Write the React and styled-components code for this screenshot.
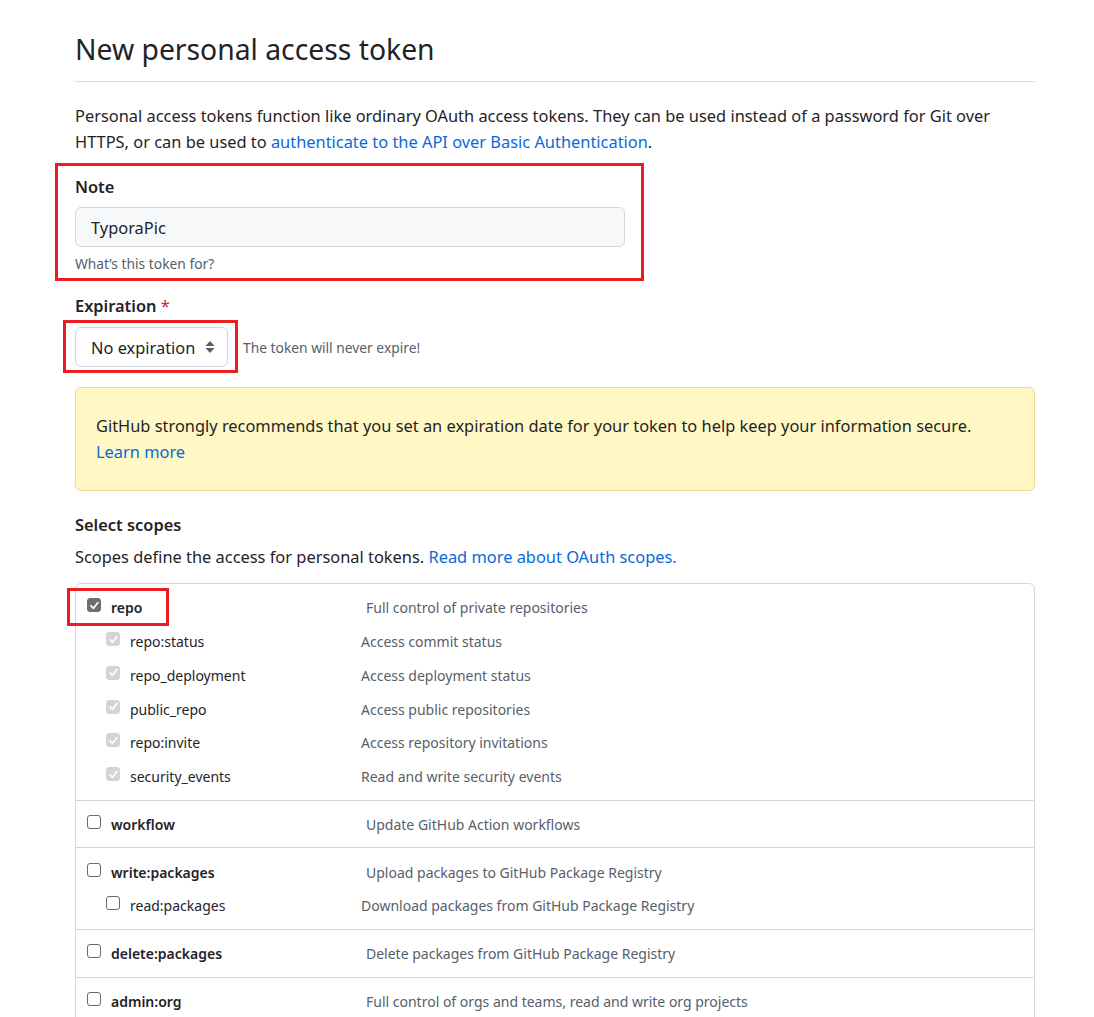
import React from 'react'
import styled, { createGlobalStyle } from 'styled-components'

const GlobalStyle = createGlobalStyle`
  body {
    margin: 0;
    background: #ffffff;
    font-family: "Noto Sans", "Open Sans", "Liberation Sans", sans-serif;
    color: #1f2328;
  }
`

const scopes = [
  {
    name: 'repo', desc: 'Full control of private repositories', checked: true, mark: true,
    children: [
      { name: 'repo:status', desc: 'Access commit status' },
      { name: 'repo_deployment', desc: 'Access deployment status' },
      { name: 'public_repo', desc: 'Access public repositories' },
      { name: 'repo:invite', desc: 'Access repository invitations' },
      { name: 'security_events', desc: 'Read and write security events' },
    ],
  },
  { name: 'workflow', desc: 'Update GitHub Action workflows' },
  {
    name: 'write:packages', desc: 'Upload packages to GitHub Package Registry',
    children: [{ name: 'read:packages', desc: 'Download packages from GitHub Package Registry' }],
  },
  { name: 'delete:packages', desc: 'Delete packages from GitHub Package Registry' },
  { name: 'admin:org', desc: 'Full control of orgs and teams, read and write org projects' },
]

function CheckBox({ state }) {
  return (
    <Box state={state}>
      {state !== 'off' && (
        <svg width="11" height="11" viewBox="0 0 12 12">
          <path d="M2.2 6.4 L4.9 9 L9.8 2.8" fill="none" stroke="#fff" strokeWidth="1.9" strokeLinecap="round" strokeLinejoin="round" />
        </svg>
      )}
    </Box>
  )
}

function SelectArrows() {
  return (
    <svg width="12" height="14" viewBox="0 0 12 14">
      <path d="M6 1 L10.5 6 L1.5 6 Z" fill="#57606a" />
      <path d="M6 13 L10.5 8 L1.5 8 Z" fill="#57606a" />
    </svg>
  )
}

function App() {
  return (
    <Page>
      <GlobalStyle />
      <Title>New personal access token</Title>

      <Intro>
        Personal access tokens function like ordinary OAuth access tokens. They can be used instead of a password for Git over
        HTTPS, or can be used to <Link>authenticate to the API over Basic Authentication</Link>.
      </Intro>

      <NoteGroup>
        <Label>Note</Label>
        <TextInput defaultValue="TyporaPic" />
        <Hint>What’s this token for?</Hint>
        <Marker top={-12} left={-20} right={-19} bottom={-7} />
      </NoteGroup>

      <FieldGroup>
        <Label>Expiration <Required>*</Required></Label>
        <SelectRow>
          <SelectWrap>
            <Select>
              No expiration
              <SelectArrows />
            </Select>
            <Marker top={-7} left={-12} right={-10} bottom={-6} />
          </SelectWrap>
          <SideNote>The token will never expire!</SideNote>
        </SelectRow>
      </FieldGroup>

      <Flash>
        GitHub strongly recommends that you set an expiration date for your token to help keep your information secure.
        <br />
        <Link>Learn more</Link>
      </Flash>

      <ScopesTitle>Select scopes</ScopesTitle>
      <ScopesIntro>
        Scopes define the access for personal tokens. <Link>Read more about OAuth scopes.</Link>
      </ScopesIntro>

      <ScopeTable>
        {scopes.map((s) => (
          <ScopeGroup key={s.name}>
            <ScopeRow>
              <ScopeName>
                <ScopeTag>
                  <CheckBox state={s.checked ? 'on' : 'off'} />
                  <ScopeLabel>{s.name}</ScopeLabel>
                  {s.mark && <Marker top={-3} left={-20} right={-27} bottom={-1} />}
                </ScopeTag>
              </ScopeName>
              <ScopeDesc>{s.desc}</ScopeDesc>
            </ScopeRow>
            {s.children && s.children.map((c) => (
              <ScopeRow key={c.name} child>
                <ScopeName child>
                  <ScopeTag>
                    <CheckBox state={s.checked ? 'disabled' : 'off'} />
                    <ScopeLabel child>{c.name}</ScopeLabel>
                  </ScopeTag>
                </ScopeName>
                <ScopeDesc>{c.desc}</ScopeDesc>
              </ScopeRow>
            ))}
          </ScopeGroup>
        ))}
      </ScopeTable>
    </Page>
  )
}

export default App

const Page = styled.div`
  width: 960px;
  padding: 30px 0 40px 75px;
`

const Title = styled.h1`
  margin: 0;
  font-size: 28.3px;
  font-weight: 400;
  line-height: 38px;
  padding-bottom: 13px;
  border-bottom: 1px solid #d8dee4;
  color: #1f2328;
`

const Intro = styled.p`
  margin: 21px 0 0;
  font-size: 16.4px;
  line-height: 26px;
  color: #1f2328;
`

const Link = styled.a`
  color: #0969da;
  text-decoration: none;
  cursor: pointer;
`

const FieldGroup = styled.div`
  position: relative;
  margin-top: 20px;
`

const NoteGroup = styled(FieldGroup)`
  width: 550px;
`

const Label = styled.div`
  font-size: 16.4px;
  font-weight: 600;
  line-height: 24px;
  color: #1f2328;
`

const Required = styled.span`
  color: #cf222e;
  font-weight: 400;
`

const TextInput = styled.input`
  display: block;
  box-sizing: border-box;
  width: 550px;
  height: 40px;
  margin-top: 8px;
  padding: 0 15px;
  font-family: inherit;
  font-size: 16.4px;
  color: #1f2328;
  background: #f6f8fa;
  border: 1px solid #d0d7de;
  border-radius: 6px;
  outline: none;
`

const Hint = styled.div`
  margin-top: 7px;
  font-size: 13.8px;
  line-height: 20px;
  color: #57606a;
`

const Marker = styled.span`
  position: absolute;
  top: ${(p) => p.top}px;
  left: ${(p) => p.left}px;
  right: ${(p) => p.right}px;
  bottom: ${(p) => p.bottom}px;
  border: 3px solid #ec1c24;
  pointer-events: none;
`

const SelectRow = styled.div`
  display: flex;
  align-items: center;
  gap: 15px;
  margin-top: 9px;
`

const SelectWrap = styled.div`
  position: relative;
`

const Select = styled.div`
  box-sizing: border-box;
  width: 153px;
  height: 40px;
  display: flex;
  align-items: center;
  justify-content: space-between;
  padding: 0 11px 0 15px;
  font-size: 16.4px;
  color: #1f2328;
  background: #ffffff;
  border: 1px solid #d0d7de;
  border-radius: 6px;
`

const SideNote = styled.span`
  font-size: 13.8px;
  color: #57606a;
`

const Flash = styled.div`
  margin-top: 20px;
  padding: 25px 20px;
  font-size: 16.4px;
  line-height: 26px;
  color: #1f2328;
  background: #fff8c5;
  border: 1px solid #ecd98a;
  border-radius: 6px;
`

const ScopesTitle = styled.div`
  margin-top: 22px;
  font-size: 16.4px;
  font-weight: 600;
  line-height: 24px;
`

const ScopesIntro = styled.p`
  margin: 7px 0 0;
  font-size: 16.4px;
  line-height: 26px;
`

const ScopeTable = styled.div`
  margin-top: 13px;
  border: 1px solid #d0d7de;
  border-radius: 6px;
`

const ScopeGroup = styled.div`
  padding: 7px 0 6px;
  border-top: 1px solid #d0d7de;

  &:first-child {
    border-top: none;
  }
`

const ScopeRow = styled.div`
  display: flex;
  align-items: stretch;
  height: 33.75px;
  padding-left: ${(p) => (p.child ? 30 : 11)}px;
`

const ScopeName = styled.span`
  display: flex;
  width: ${(p) => (p.child ? 255 : 279)}px;
`

const ScopeTag = styled.span`
  position: relative;
  display: flex;
  align-items: center;
`

const ScopeLabel = styled.span`
  margin-left: 10px;
  font-size: 14px;
  font-weight: ${(p) => (p.child ? 400 : 600)};
  color: #1f2328;
`

const ScopeDesc = styled.span`
  display: flex;
  align-items: center;
  font-size: 14px;
  color: #57606a;
`

const Box = styled.span`
  box-sizing: border-box;
  width: 14px;
  height: 14px;
  margin-top: -5px;
  display: flex;
  align-items: center;
  justify-content: center;
  border-radius: 3px;
  flex-shrink: 0;
  background: ${(p) => (p.state === 'on' ? '#6e6e6e' : p.state === 'disabled' ? '#d4d4d4' : '#ffffff')};
  border: 1px solid ${(p) => (p.state === 'on' ? '#6e6e6e' : p.state === 'disabled' ? '#d4d4d4' : '#6b6b6b')};
`
